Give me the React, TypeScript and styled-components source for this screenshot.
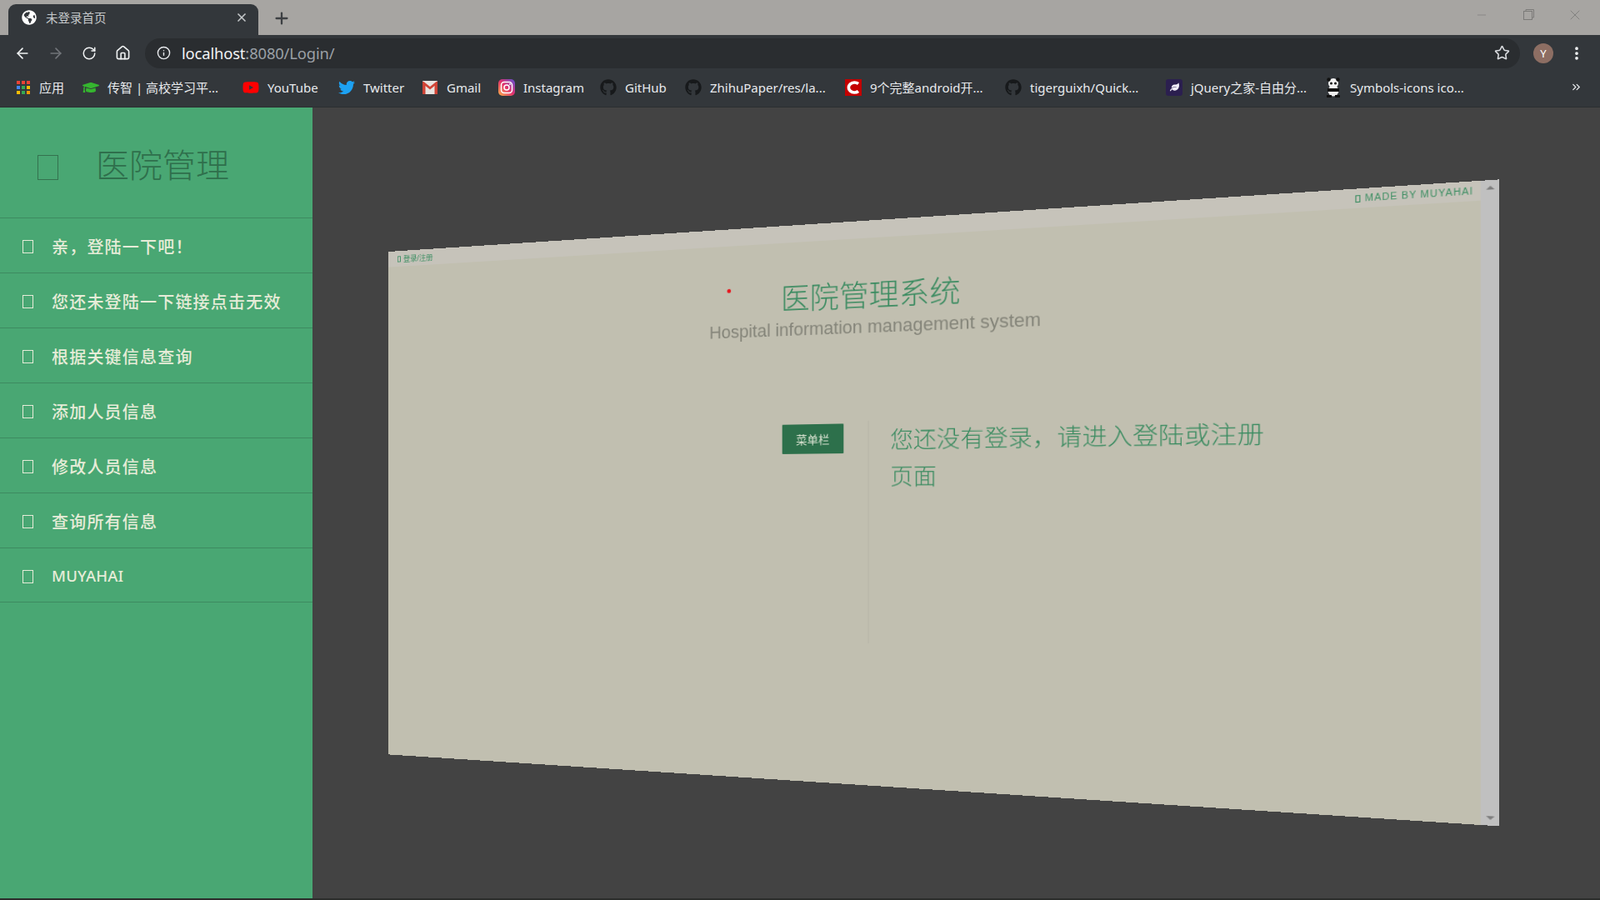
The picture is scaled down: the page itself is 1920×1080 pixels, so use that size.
import styled, { createGlobalStyle } from "styled-components";
import { ReactNode } from "react";
import { FaGlobeAmericas, FaGithub, FaTwitter, FaYoutube, FaGraduationCap, FaLeaf } from "react-icons/fa";
import { ArrowLeft, ArrowRight, RotateCw, Home, Info, Star, Plus, X, Minus, EllipsisVertical, ChevronsRight } from "lucide-react";

const PANEL_W = 1333;
const PANEL_H = 680;

// rectangle -> tilted quad, corners measured on the screen relative to the top left corner
const quadMatrix = (w: number, h: number, q: number[][]) => {
  const [[x0, y0], [x1, y1], [x2, y2], [x3, y3]] = q;
  const dx1 = x1 - x2, dx2 = x3 - x2, sx = x0 - x1 + x2 - x3;
  const dy1 = y1 - y2, dy2 = y3 - y2, sy = y0 - y1 + y2 - y3;
  const den = dx1 * dy2 - dx2 * dy1;
  const g = (sx * dy2 - dx2 * sy) / den;
  const k = (dx1 * sy - sx * dy1) / den;
  const a = x1 - x0 + g * x1, b = x3 - x0 + k * x3;
  const d = y1 - y0 + g * y1, e = y3 - y0 + k * y3;
  return `matrix3d(${a / w},${d / w},0,${g / w},${b / h},${e / h},0,${k / h},0,0,1,0,${x0},${y0},0,1)`;
};

const panelTransform = quadMatrix(PANEL_W, PANEL_H, [
  [0, 0],
  [1332.7, -86.6],
  [1332.7, 689.4],
  [0, 603.4],
]);

const GlobalStyle = createGlobalStyle`
  html, body {
    margin: 0;
    padding: 0;
    background: #434343;
    overflow: hidden;
  }
  * {
    box-sizing: border-box;
  }
`;

const Page = styled.div`
  width: 1920px;
  height: 1080px;
  display: flex;
  flex-direction: column;
  font-family: "Noto Sans", "Noto Sans CJK SC", sans-serif;
`;

const TabStrip = styled.div`
  height: 42px;
  background: #a7a5a2;
  display: flex;
  align-items: flex-end;
  padding-left: 10px;
`;

const Tab = styled.div`
  width: 300px;
  height: 37px;
  background: #33373b;
  border-radius: 9px 9px 0 0;
  display: flex;
  align-items: center;
  padding: 0 12px 6px 16px;
  color: #fff;
`;

const TabTitle = styled.span`
  flex: 1;
  margin-left: 11px;
  font-size: 14.5px;
  color: #c5c8ca;
`;

const NewTab = styled.div`
  margin: 0 0 7px 17px;
  height: 24px;
  display: flex;
  color: #3d4043;
`;

const WindowControls = styled.div`
  margin-left: auto;
  margin-right: 2px;
  height: 42px;
  padding-bottom: 7px;
  display: flex;
  align-items: center;
  color: #7b7a78;
`;

const WindowButton = styled.div`
  width: 56px;
  display: flex;
  justify-content: center;
`;

const RestoreIcon = () => (
  <svg width="15" height="15" viewBox="0 0 15 15" fill="none" stroke="currentColor">
    <rect x="1.5" y="3.5" width="10" height="10" />
    <path d="M4 3V1.5h9.5V11H12" />
  </svg>
);

const Toolbar = styled.div`
  height: 46px;
  background: #33373b;
  display: flex;
  align-items: center;
  padding: 0 0 3px 17px;
`;

const NavButton = styled.div<{ $dim?: boolean }>`
  width: 20px;
  margin-right: 20px;
  display: flex;
  justify-content: center;
  color: ${(p) => (p.$dim ? "#72757a" : "#f1f3f4")};
`;

const Omnibox = styled.div`
  margin-left: -3px;
  width: 1650px;
  height: 36px;
  border-radius: 18px;
  background: #2a2d30;
  display: flex;
  align-items: center;
  padding-left: 14px;
  color: #e8eaed;
`;

const Url = styled.span`
  margin-left: 13px;
  font-size: 18.4px;
  letter-spacing: -0.15px;
  color: #f1f3f4;
`;

const UrlRest = styled.span`
  color: #9aa0a6;
`;

const StarSlot = styled.div`
  margin-left: auto;
  margin-right: 12px;
  display: flex;
`;

const Avatar = styled.div`
  width: 24px;
  height: 24px;
  margin-left: 16px;
  border-radius: 50%;
  background: #8d6e63;
  color: #fff;
  font-size: 13px;
  display: flex;
  align-items: center;
  justify-content: center;
`;

const MenuSlot = styled.div`
  margin-left: 18px;
  display: flex;
  color: #f1f3f4;
`;

const BookmarkBar = styled.div`
  height: 41px;
  background: #33373b;
  display: flex;
  align-items: center;
  padding: 0 0 7px 17px;
  border-bottom: 1px solid #2b2e31;
`;

const Bookmark = styled.div<{ $width: number; $gap?: number }>`
  width: ${(p) => p.$width}px;
  flex: none;
  display: flex;
  align-items: center;
  gap: 10px;
  margin-right: ${(p) => p.$gap ?? 21}px;
  color: #e8eaed;
  font-size: 15px;
  white-space: nowrap;
`;

const BookmarkIcon = styled.div<{ $color?: string }>`
  width: 20px;
  height: 20px;
  flex: none;
  display: flex;
  align-items: center;
  justify-content: center;
  color: ${(p) => p.$color ?? "#e8eaed"};
`;

const MoreBookmarks = styled.div`
  margin-left: auto;
  margin-right: 21px;
  display: flex;
  color: #e8eaed;
`;

const AppsIcon = () => {
  const colors = ["#ea4335", "#ea4335", "#ea4335", "#4285f4", "#34a853", "#fbbc05", "#fbbc05", "#34a853", "#f29900"];
  return (
    <svg width="17" height="17" viewBox="0 0 17 17">
      {colors.map((c, i) => (
        <rect key={i} x={(i % 3) * 6 + 1} y={Math.floor(i / 3) * 6 + 1} width="4" height="4" fill={c} />
      ))}
    </svg>
  );
};

const GmailIcon = () => (
  <svg width="18" height="16" viewBox="0 0 18 16">
    <rect width="18" height="16" rx="1" fill="#e8e4e0" />
    <path d="M0 1v15h3.500V6L9 10.500 14.500 6v10H18V1h-1.500L9 7 1.500 1z" fill="#cf4436" />
  </svg>
);

const InstagramIcon = () => (
  <svg width="20" height="20" viewBox="0 0 20 20" fill="none">
    <defs>
      <linearGradient id="ig" x1="0" y1="1" x2="1" y2="0">
        <stop offset="0" stopColor="#fdb54a" />
        <stop offset="0.5" stopColor="#e1306c" />
        <stop offset="1" stopColor="#5b51d8" />
      </linearGradient>
    </defs>
    <rect width="20" height="20" rx="5" fill="url(#ig)" />
    <rect x="3.500" y="3.500" width="13" height="13" rx="3.500" stroke="#fff" strokeWidth="1.500" />
    <circle cx="10" cy="10" r="3" stroke="#fff" strokeWidth="1.500" />
    <circle cx="14" cy="6" r="0.900" fill="#fff" />
  </svg>
);

const RedCIcon = () => (
  <svg width="20" height="20" viewBox="0 0 20 20" fill="none">
    <rect width="20" height="20" fill="#c40000" />
    <path d="M16 5.500a7 6 0 1 0 0 9" stroke="#fff" strokeWidth="3.600" />
  </svg>
);

const JqueryIcon = styled.div`
  width: 20px;
  height: 20px;
  border-radius: 3px;
  background: #2b1f4f;
  color: #f1eef8;
  font-size: 11px;
  display: flex;
  align-items: center;
  justify-content: center;
`;

const PandaIcon = () => (
  <svg width="20" height="24" viewBox="0 0 20 24">
    <ellipse cx="10" cy="16" rx="6.500" ry="6.500" fill="#eee" />
    <circle cx="10" cy="7" r="6" fill="#f2f2f2" />
    <circle cx="4.500" cy="2.500" r="2.200" fill="#111" />
    <circle cx="15.500" cy="2.500" r="2.200" fill="#111" />
    <circle cx="7.500" cy="7" r="1.500" fill="#111" />
    <circle cx="12.500" cy="7" r="1.500" fill="#111" />
    <path d="M3 13h14v4H3zM2 21h6v3H2zM12 21h6v3h-6z" fill="#111" />
  </svg>
);

const Body = styled.div`
  flex: 1;
  min-height: 0;
  display: flex;
`;

const Sidebar = styled.nav`
  width: 375px;
  flex: none;
  background: #49a773;
`;

const Brand = styled.div`
  height: 133px;
  display: flex;
  align-items: center;
  padding: 5px 0 0 45px;
  gap: 45px;
  border-bottom: 1.5px solid #3d8a60;
`;

const BrandIcon = styled.span`
  width: 25px;
  height: 30px;
  margin-top: 7px;
  border: 1.5px solid #34724f;
`;

const BrandName = styled.h1`
  margin: 0;
  font-size: 40px;
  font-weight: 300;
  line-height: 1;
  color: #2f6f4c;
`;

const MenuItem = styled.div<{ $height?: number; $latin?: boolean }>`
  height: ${(p) => p.$height ?? 66}px;
  display: flex;
  align-items: center;
  padding: 1px 0 0 27px;
  gap: 22px;
  border-bottom: 1.5px solid #3d8a60;
  color: #e6ecd8;
  font-size: ${(p) => (p.$latin ? 18.5 : 20)}px;
  font-weight: 500;
  letter-spacing: ${(p) => (p.$latin ? 0.2 : 1.2)}px;
`;

const MenuIcon = styled.span`
  width: 13px;
  height: 16px;
  margin-top: 2px;
  border: 1.5px solid #e6ecd8;
`;

const Stage = styled.main`
  flex: 1;
  background: #434343;
  padding: 173px 0 0 91px;
`;

const Panel = styled.section`
  width: ${PANEL_W}px;
  height: ${PANEL_H}px;
  display: flex;
  background: #c1bfb0;
  transform-origin: 0 0;
  transform: ${panelTransform};
`;

const Scroller = styled.div`
  flex: 1;
  min-width: 0;
`;

const TopBar = styled.div`
  height: 21px;
  padding: 0 7px 0 14px;
  display: flex;
  align-items: center;
  justify-content: space-between;
  background: #c6c3ba;
  color: #3f8f64;
`;

const TopLink = styled.span<{ $size: number; $spacing?: number; $gap: number }>`
  display: flex;
  align-items: center;
  gap: ${(p) => p.$gap}px;
  font-family: "Liberation Sans", "Noto Sans CJK SC", sans-serif;
  font-size: ${(p) => p.$size}px;
  letter-spacing: ${(p) => p.$spacing ?? 0}px;
`;

const TopIcon = styled.span`
  width: 5px;
  height: 8px;
  border: 1px solid #3f8f64;
`;

const Hero = styled.header`
  position: relative;
  padding: 45px 0 0 4px;
  text-align: center;
`;

const Title = styled.h2`
  margin: 0;
  font-size: 36.6px;
  font-weight: 300;
  line-height: 46px;
  color: #3a8b60;
`;

const Subtitle = styled.p`
  margin: 2px 0 0;
  font-family: "Liberation Sans", sans-serif;
  font-size: 22px;
  line-height: 28px;
  color: #85857a;
`;

const RedDot = styled.span`
  position: absolute;
  left: 481px;
  top: 53px;
  width: 5px;
  height: 5px;
  border-radius: 50%;
  background: #e8141c;
`;

const Content = styled.div`
  margin-top: 99px;
  padding-left: 552px;
  display: flex;
`;

const MenuButton = styled.div`
  width: 77px;
  height: 36px;
  margin-top: 3px;
  background: #2d704b;
  border-radius: 1px;
  color: #dbe3d2;
  font-size: 14px;
  display: flex;
  align-items: center;
  justify-content: center;
`;

const Message = styled.div`
  margin-left: 30px;
  height: 268px;
  width: 450px;
  border-left: 1px solid #b7b5a7;
  padding-left: 26px;
  font-size: 27.8px;
  font-weight: 300;
  line-height: 44px;
  color: #3a8b60;
`;

const ScrollTrack = styled.div`
  width: 17px;
  background: #c0c0c0;
  display: flex;
  flex-direction: column;
  justify-content: space-between;
  align-items: center;
  padding: 6px 0;
`;

const ScrollArrow = styled.span<{ $down?: boolean }>`
  width: 0;
  height: 0;
  border-left: 4px solid transparent;
  border-right: 4px solid transparent;
  ${(p) => (p.$down ? "border-top: 4px solid #7d7d7d;" : "border-bottom: 4px solid #7d7d7d;")}
`;

const BottomEdge = styled.div`
  height: 2px;
  background: #2b2d2b;
`;

interface BookmarkData {
  label: string;
  width: number;
  gap?: number;
  icon: ReactNode;
}

const bookmarks: BookmarkData[] = [
  { label: "应用", width: 64, gap: 18, icon: <BookmarkIcon><AppsIcon /></BookmarkIcon> },
  { label: "传智 | 高校学习平...", width: 170, gap: 22, icon: <BookmarkIcon $color="#35b52f"><FaGraduationCap size={20} /></BookmarkIcon> },
  { label: "YouTube", width: 94, icon: <BookmarkIcon $color="#ff0000"><FaYoutube size={20} /></BookmarkIcon> },
  { label: "Twitter", width: 79, icon: <BookmarkIcon $color="#1da1f2"><FaTwitter size={20} /></BookmarkIcon> },
  { label: "Gmail", width: 71, icon: <BookmarkIcon><GmailIcon /></BookmarkIcon> },
  { label: "Instagram", width: 101, icon: <BookmarkIcon><InstagramIcon /></BookmarkIcon> },
  { label: "GitHub", width: 81, icon: <BookmarkIcon $color="#17191b"><FaGithub size={20} /></BookmarkIcon> },
  { label: "ZhihuPaper/res/la...", width: 170, gap: 22, icon: <BookmarkIcon $color="#17191b"><FaGithub size={20} /></BookmarkIcon> },
  { label: "9个完整android开...", width: 168, gap: 24, icon: <BookmarkIcon><RedCIcon /></BookmarkIcon> },
  { label: "tigerguixh/Quick...", width: 163, gap: 30, icon: <BookmarkIcon $color="#17191b"><FaGithub size={20} /></BookmarkIcon> },
  { label: "jQuery之家-自由分...", width: 171, gap: 20, icon: <BookmarkIcon><JqueryIcon><FaLeaf /></JqueryIcon></BookmarkIcon> },
  { label: "Symbols-icons ico...", width: 173, icon: <BookmarkIcon><PandaIcon /></BookmarkIcon> },
];

const menu = ["亲，登陆一下吧！", "您还未登陆一下链接点击无效", "根据关键信息查询", "添加人员信息", "修改人员信息", "查询所有信息"];

const App = () => {
  return (
    <Page>
      <GlobalStyle />
      <TabStrip>
        <Tab>
          <FaGlobeAmericas size={18} />
          <TabTitle>未登录首页</TabTitle>
          <X size={16} strokeWidth={2.5} color="#c5c8ca" />
        </Tab>
        <NewTab>
          <Plus size={22} strokeWidth={2.5} />
        </NewTab>
        <WindowControls>
          <WindowButton><Minus size={16} strokeWidth={1} /></WindowButton>
          <WindowButton><RestoreIcon /></WindowButton>
          <WindowButton><X size={20} strokeWidth={1} /></WindowButton>
        </WindowControls>
      </TabStrip>
      <Toolbar>
        <NavButton><ArrowLeft size={20} /></NavButton>
        <NavButton $dim><ArrowRight size={20} /></NavButton>
        <NavButton><RotateCw size={18} /></NavButton>
        <NavButton><Home size={19} /></NavButton>
        <Omnibox>
          <Info size={17} />
          <Url>
            localhost<UrlRest>:8080/Login/</UrlRest>
          </Url>
          <StarSlot><Star size={19} strokeWidth={2} color="#dadce0" /></StarSlot>
        </Omnibox>
        <Avatar>Y</Avatar>
        <MenuSlot><EllipsisVertical size={20} strokeWidth={2.5} /></MenuSlot>
      </Toolbar>
      <BookmarkBar>
        {bookmarks.map((b) => (
          <Bookmark key={b.label} $width={b.width} $gap={b.gap}>
            {b.icon}
            {b.label}
          </Bookmark>
        ))}
        <MoreBookmarks><ChevronsRight size={15} /></MoreBookmarks>
      </BookmarkBar>
      <Body>
        <Sidebar>
          <Brand>
            <BrandIcon />
            <BrandName>医院管理</BrandName>
          </Brand>
          {menu.map((label) => (
            <MenuItem key={label}>
              <MenuIcon />
              {label}
            </MenuItem>
          ))}
          <MenuItem $height={65} $latin>
            <MenuIcon />
            MUYAHAI
          </MenuItem>
        </Sidebar>
        <Stage>
          <Panel>
            <Scroller>
              <TopBar>
                <TopLink $size={10.5} $gap={4}>
                  <TopIcon />
                  登录/注册
                </TopLink>
                <TopLink $size={10} $spacing={0.8} $gap={5}>
                  <TopIcon />
                  MADE BY MUYAHAI
                </TopLink>
              </TopBar>
              <Hero>
                <RedDot />
                <Title>医院管理系统</Title>
                <Subtitle>Hospital information management system</Subtitle>
              </Hero>
              <Content>
                <MenuButton>菜单栏</MenuButton>
                <Message>您还没有登录，请进入登陆或注册页面</Message>
              </Content>
            </Scroller>
            <ScrollTrack>
              <ScrollArrow />
              <ScrollArrow $down />
            </ScrollTrack>
          </Panel>
        </Stage>
      </Body>
      <BottomEdge />
    </Page>
  );
};

export default App;
